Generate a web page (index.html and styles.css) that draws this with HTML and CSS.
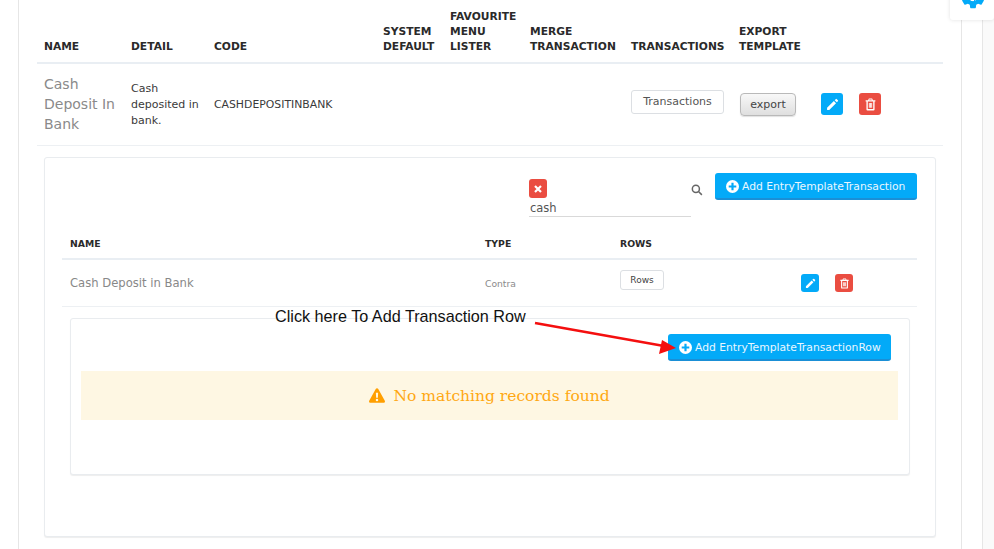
FILE: index.html
```html
<!DOCTYPE html>
<html lang="en">
<head>
<meta charset="utf-8">
<title>Entry Templates</title>
<link rel="stylesheet" href="styles.css">
</head>
<body>
<svg class="defs" aria-hidden="true">
  <symbol id="i-plus" viewBox="0 0 24 24"><path fill="currentColor" fill-rule="evenodd" d="M12 0a12 12 0 1 0 0 24 12 12 0 0 0 0-24zm-2 5h4v5h5v4h-5v5h-4v-5H5v-4h5z"/></symbol>
  <symbol id="i-pencil" viewBox="0 0 24 24"><path fill="currentColor" d="M2 18 14.500 5.500l4 4L6 22H2zM16 4l1.900-1.900a1.500 1.500 0 0 1 2.100 0l1.900 1.900a1.500 1.500 0 0 1 0 2.100L20 8z"/></symbol>
  <symbol id="i-trash" viewBox="0 0 24 24"><path fill="currentColor" fill-rule="evenodd" d="M9 1h6l1.500 3H21v2.500h-1.500V21a2 2 0 0 1-2 2h-11a2 2 0 0 1-2-2V6.500H3V4h4.500zm1 1.800L9.500 4h5L14 2.800zM7 6.500V20.500h10V6.500zM9 9h1.600v9H9zm2.200 0h1.600v9h-1.600zm2.200 0H15v9h-1.600z"/></symbol>
</svg>
<div class="shell">
  <main class="main">
    <table class="grid outer">
      <colgroup>
        <col class="c87"><col class="c83"><col class="c169"><col class="c67"><col class="c80"><col class="c101"><col class="c108"><col class="c82"><col>
      </colgroup>
      <thead>
        <tr>
          <th>NAME</th><th>DETAIL</th><th>CODE</th><th>SYSTEM<br>DEFAULT</th><th>FAVOURITE<br>MENU<br>LISTER</th><th>MERGE<br>TRANSACTION</th><th>TRANSACTIONS</th><th>EXPORT<br>TEMPLATE</th><th></th>
        </tr>
      </thead>
      <tbody>
        <tr class="main-row">
          <td class="big-name">Cash Deposit In Bank</td>
          <td class="small-text">Cash deposited in bank.</td>
          <td class="small-text code">CASHDEPOSITINBANK</td>
          <td></td><td></td><td></td>
          <td><a class="btn-plain btn-trans">Transactions</a></td>
          <td><button class="btn-export">export</button></td>
          <td>
            <div class="actions big">
              <a class="icon-btn blue"><svg><use href="#i-pencil"/></svg></a>
              <a class="icon-btn red"><svg><use href="#i-trash"/></svg></a>
            </div>
          </td>
        </tr>
        <tr>
          <td colspan="9" class="nest-cell">
            <section class="card outer-card">
              <div class="toolbar">
                <div class="search">
                  <a class="clear-btn"><svg viewBox="0 0 10 10"><path d="M2 2l6 6M8 2l-6 6"/></svg></a>
                  <div class="search-value">cash</div>
                </div>
                <svg class="search-icon" viewBox="0 0 16 16"><circle cx="6.500" cy="6.500" r="4.700"/><path d="M10 10l4.500 4.500"/></svg>
                <a class="btn-add"><svg><use href="#i-plus"/></svg>Add EntryTemplateTransaction</a>
              </div>
              <table class="grid inner">
                <colgroup><col class="c415"><col class="c135"><col class="c181"><col></colgroup>
                <thead><tr><th>NAME</th><th>TYPE</th><th>ROWS</th><th></th></tr></thead>
                <tbody>
                  <tr class="inner-row">
                    <td class="inner-name">Cash Deposit in Bank</td>
                    <td class="type">Contra</td>
                    <td><a class="btn-plain btn-rows">Rows</a></td>
                    <td>
                      <div class="actions small">
                        <a class="icon-btn blue"><svg><use href="#i-pencil"/></svg></a>
                        <a class="icon-btn red"><svg><use href="#i-trash"/></svg></a>
                      </div>
                    </td>
                  </tr>
                  <tr>
                    <td colspan="4" class="nest-cell-2">
                      <section class="card inner-card">
                        <div class="toolbar-2">
                          <a class="btn-add"><svg><use href="#i-plus"/></svg>Add EntryTemplateTransactionRow</a>
                        </div>
                        <div class="alert">
                          <svg viewBox="0 0 24 22"><path fill-rule="evenodd" d="M12 0c.8 0 1.500.4 1.900 1.100l9.800 17.700c.8 1.500-.3 3.200-1.900 3.200H2.200C.6 22-.5 20.300.3 18.800L10.100 1.100C10.500.4 11.200 0 12 0zM10.300 7l.4 7.500h2.600l.4-7.500zM12 16a1.900 1.900 0 1 0 0 3.800 1.900 1.900 0 0 0 0-3.800z"/></svg>
                          <span>No matching records found</span>
                        </div>
                      </section>
                    </td>
                  </tr>
                </tbody>
              </table>
            </section>
          </td>
        </tr>
      </tbody>
    </table>
  </main>
  <div class="rail"><div class="rail-strip"></div></div>
  <div class="gear-box">
    <svg viewBox="0 0 24 24"><path fill="currentColor" fill-rule="evenodd" d="M19.140 12.940c.04-.3.06-.61.06-.94 0-.32-.02-.64-.07-.94l2.030-1.580c.18-.14.23-.41.12-.61l-1.920-3.320c-.12-.22-.37-.29-.59-.22l-2.390.96c-.5-.38-1.030-.7-1.620-.94l-.36-2.540c-.04-.24-.24-.41-.48-.41h-3.840c-.24 0-.43.17-.47.41l-.36 2.540c-.59.24-1.130.57-1.620.94l-2.390-.96c-.22-.08-.47 0-.59.22L2.740 8.870c-.12.21-.08.47.12.61l2.030 1.580c-.05.3-.09.63-.09.94s.02.64.07.94l-2.030 1.580c-.18.14-.23.41-.12.61l1.920 3.320c.12.22.37.29.59.22l2.390-.96c.5.38 1.030.7 1.620.94l.36 2.540c.05.24.24.41.48.41h3.840c.24 0 .44-.17.47-.41l.36-2.540c.59-.24 1.130-.56 1.620-.94l2.390.96c.22.08.47 0 .59-.22l1.920-3.320c.12-.22.07-.47-.12-.61l-2.010-1.580zM12 15.600c-1.980 0-3.600-1.620-3.600-3.600s1.620-3.600 3.600-3.600 3.600 1.620 3.600 3.600-1.620 3.600-3.600 3.600z"/></svg>
  </div>
  <div class="callout">Click here To Add Transaction Row</div>
  <svg class="arrow" viewBox="0 0 160 50"><path class="arrow-line" d="M5 8 134 31"/><path class="arrow-head" d="M146 33 132 25 129 39z"/></svg>
</div>
</body>
</html>
```

FILE: styles.css
```css
* { box-sizing: border-box; }
html, body { margin: 0; padding: 0; background: #fff; }
body { font-family: "DejaVu Sans", sans-serif; color: #333; }
.defs { position: absolute; width: 0; height: 0; }

.shell { position: relative; display: flex; width: 994px; height: 549px; overflow: hidden; padding-left: 18px; }
.main { width: 944px; flex: none; height: 549px; overflow: hidden; border-left: 1px solid #e6e6e6; border-right: 1px solid #e6e6e6; padding: 0 18px; }
.rail { flex: 1; display: flex; justify-content: flex-end; }
.rail-strip { width: 12px; background: #fafafa; border-left: 1px solid #e6e6e6; }

.grid { border-collapse: separate; border-spacing: 0; table-layout: fixed; width: 100%; }
.grid th { text-align: left; vertical-align: bottom; font-weight: 700; color: #2a2a2a; border-bottom: 2px solid #e9eef3; }
.outer { width: 906px; }
.outer > thead th { font-size: 10.700px; line-height: 15px; padding: 9px 7px 8px; white-space: nowrap; }
.c87 { width: 87px; } .c83 { width: 83px; } .c169 { width: 169px; } .c67 { width: 67px; }
.c80 { width: 80px; } .c101 { width: 101px; } .c108 { width: 108px; } .c82 { width: 82px; }
.c415 { width: 415px; } .c135 { width: 135px; } .c181 { width: 181px; }

.main-row > td { padding: 10px 7px 11px; border-bottom: 1px solid #edf0f3; vertical-align: middle; }
.big-name { font-size: 14px; line-height: 20px; color: #8a8a8a; }
.main-row > .small-text { padding-top: 11px; padding-bottom: 10px; font-size: 11px; line-height: 16px; color: #3a3a3a; }
.main-row > .code { font-size: 10.850px; }

.btn-plain { display: inline-block; background: #fff; border: 1px solid #dcdfe3; border-radius: 3px; text-align: center; color: #555; }
.btn-trans { width: 93px; height: 24px; font-size: 11px; line-height: 22px; margin-bottom: 5px; vertical-align: middle; }
.btn-rows { width: 44px; height: 20px; font-size: 9px; line-height: 18px; margin-bottom: 6px; vertical-align: middle; color: #444; }
.btn-export { display: block; width: 56px; height: 23px; margin: 0 0 0 1px; padding: 0; font-family: inherit; font-size: 11px; color: #444; border: 1px solid #b9b9b9; border-radius: 4px; background: linear-gradient(#f8f8f8, #dfdfdf); box-shadow: 0 1px 1px rgba(0,0,0,.12); }

.actions { display: flex; }
.actions.big { gap: 16px; }
.actions.small { gap: 16px; }
.icon-btn { display: flex; align-items: center; justify-content: center; border-radius: 3px; color: #fff; }
.icon-btn.blue { background: #03aaf8; }
.icon-btn.red { background: #ea4d41; }
.big .icon-btn { width: 22px; height: 22px; }
.big .icon-btn svg { width: 13px; height: 13px; }
.small .icon-btn { width: 18px; height: 18px; }
.small .icon-btn svg { width: 11px; height: 11px; }

.nest-cell { padding: 11px 7px 0; }
.card { background: #fff; border: 1px solid #e9ecef; border-radius: 3px; box-shadow: 0 1px 1px rgba(0,0,0,.07); }
.outer-card { padding: 15px 18px 61px 17px; height: 380px; }

.toolbar { display: flex; align-items: flex-start; justify-content: flex-end; height: 44px; margin-bottom: 10px; }
.search { width: 162px; height: 44px; padding-top: 6px; border-bottom: 1px solid #d9d9d9; }
.clear-btn { display: flex; align-items: center; justify-content: center; width: 18px; height: 19px; border-radius: 3px; background: #ea4d41; }
.clear-btn svg { width: 10px; height: 10px; fill: none; stroke: #fff; stroke-width: 2.200; }
.search-value { padding-left: 1px; font-size: 11.500px; line-height: 21px; color: #555; }
.search-icon { flex: none; width: 12px; height: 12px; margin: 11px 12px 0 0; fill: none; stroke: #666; stroke-width: 2; }

.btn-add { display: flex; align-items: center; height: 27px; padding-top: 1px; border-radius: 3px; background: #03aaf8; border-bottom: 2px solid #1a8fd6; color: #eaf7ff; font-size: 10.750px; white-space: nowrap; }
.btn-add svg { flex: none; width: 13px; height: 13px; color: #fff; margin-right: 3px; }
.toolbar .btn-add { width: 202px; padding-left: 11px; }
.toolbar-2 .btn-add { width: 223px; padding-left: 11px; }

.inner > thead th { font-size: 9.300px; line-height: 15px; padding: 9px 8px 7px; }
.inner-row > td { padding: 0 8px; height: 47px; border-bottom: 1px solid #edf0f3; vertical-align: middle; }
.inner-name { font-size: 11.600px; color: #888; }
.type { font-size: 9.200px; color: #8a8a8a; }

.nest-cell-2 { padding: 11px 7px 0 8px; }
.inner-card { height: 157px; padding: 15px 11px 0 10px; }
.toolbar-2 { display: flex; justify-content: flex-end; padding-right: 7px; margin-bottom: 10px; }
.alert { display: flex; align-items: center; justify-content: center; gap: 8px; height: 49px; background: #fef7e3; color: #ffa812; font-family: "DejaVu Serif", serif; font-size: 15.500px; }
.alert svg { width: 16px; height: 15px; fill: #ff9f00; }

.gear-box { position: absolute; left: 950px; top: -10px; width: 44px; height: 30px; background: #fff; border-radius: 3px; box-shadow: 0 0 4px rgba(0,0,0,.12); color: #03aaf8; overflow: hidden; }
.gear-box svg { position: absolute; left: 9px; top: -7px; width: 28px; height: 28px; }
.callout { position: absolute; left: 275px; top: 307px; font-family: "Liberation Sans", sans-serif; font-size: 16.200px; line-height: 18px; color: #111; white-space: nowrap; }
.arrow { position: absolute; left: 530px; top: 315px; width: 160px; height: 50px; }
.arrow-line { stroke: #f40f0f; stroke-width: 2.500; fill: none; }
.arrow-head { fill: #f40f0f; }
```
